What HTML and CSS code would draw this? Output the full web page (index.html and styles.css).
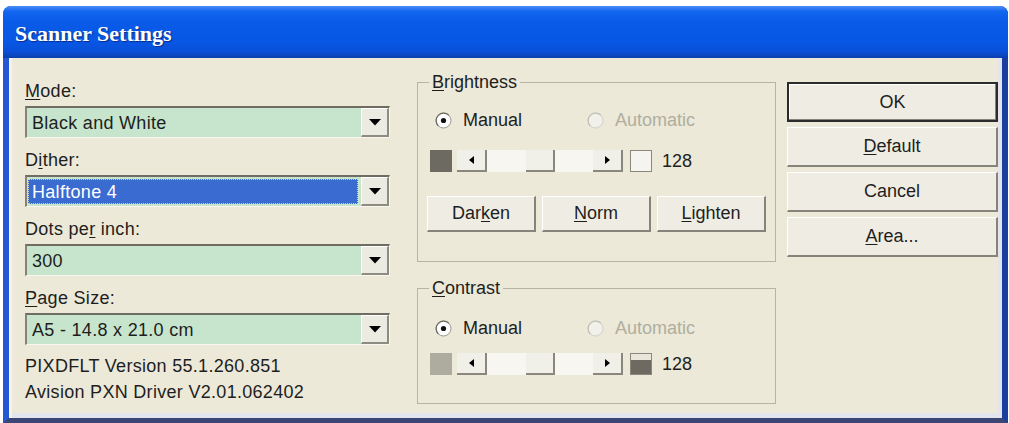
FILE: index.html
```html
<!DOCTYPE html>
<html>
<head>
<meta charset="utf-8">
<title>Scanner Settings</title>
<link rel="stylesheet" href="styles.css">
</head>
<body>
<div class="window">
  <div class="titlebar"><span class="title">Scanner Settings</span></div>
  <div class="client">
    <div class="col-left">
      <div class="label"><u>M</u>ode:</div>
      <div class="combo">
        <div class="combo-field">Black and White</div>
        <div class="combo-btn"><svg width="12" height="7" viewBox="0 0 12 7"><polygon points="0,0 12,0 6,6.5" fill="#000"/></svg></div>
      </div>
      <div class="label gap">D<u>i</u>ther:</div>
      <div class="combo">
        <div class="combo-field selected">Halftone 4</div>
        <div class="combo-btn"><svg width="12" height="7" viewBox="0 0 12 7"><polygon points="0,0 12,0 6,6.5" fill="#000"/></svg></div>
      </div>
      <div class="label gap">Dots pe<u>r</u> inch:</div>
      <div class="combo">
        <div class="combo-field">300</div>
        <div class="combo-btn"><svg width="12" height="7" viewBox="0 0 12 7"><polygon points="0,0 12,0 6,6.5" fill="#000"/></svg></div>
      </div>
      <div class="label gap"><u>P</u>age Size:</div>
      <div class="combo">
        <div class="combo-field">A5 - 14.8 x 21.0 cm</div>
        <div class="combo-btn"><svg width="12" height="7" viewBox="0 0 12 7"><polygon points="0,0 12,0 6,6.5" fill="#000"/></svg></div>
      </div>
      <div class="info first">PIXDFLT Version 55.1.260.851</div>
      <div class="info">Avision PXN Driver V2.01.062402</div>
    </div>

    <div class="col-mid">
      <fieldset class="group bright">
        <legend><u>B</u>rightness</legend>
        <div class="radio-row">
          <div class="radio r1"><svg width="17" height="17" viewBox="0 0 17 17"><circle cx="8.5" cy="8.5" r="7.5" fill="#fff" stroke="#9a988c"/><path d="M3.2 13.8 A7.5 7.5 0 0 1 13.8 3.2" fill="none" stroke="#6e6c62" stroke-width="1.2"/><circle cx="8.5" cy="8.5" r="2.6" fill="#111"/></svg><span>Manual</span></div>
          <div class="radio disabled"><svg width="17" height="17" viewBox="0 0 17 17"><circle cx="8.5" cy="8.5" r="7.5" fill="#f1f0ea" stroke="#d2d0c4"/><path d="M3.2 13.8 A7.5 7.5 0 0 1 13.8 3.2" fill="none" stroke="#c2c0b4" stroke-width="1.2"/></svg><span>Automatic</span></div>
        </div>
        <div class="slider-row">
          <div class="swatch dark"></div>
          <div class="scroll">
            <div class="sb-btn"><svg width="5" height="8" viewBox="0 0 5 8"><polygon points="5,0 5,8 0,4" fill="#000"/></svg></div>
            <div class="track"><div class="thumb"></div></div>
            <div class="sb-btn"><svg width="5" height="8" viewBox="0 0 5 8"><polygon points="0,0 0,8 5,4" fill="#000"/></svg></div>
          </div>
          <div class="valbox"></div>
          <span class="val">128</span>
        </div>
        <div class="btn-row">
          <button class="btn small">Dar<u>k</u>en</button>
          <button class="btn small"><u>N</u>orm</button>
          <button class="btn small"><u>L</u>ighten</button>
        </div>
      </fieldset>

      <fieldset class="group contrast">
        <legend><u>C</u>ontrast</legend>
        <div class="radio-row">
          <div class="radio r1"><svg width="17" height="17" viewBox="0 0 17 17"><circle cx="8.5" cy="8.5" r="7.5" fill="#fff" stroke="#9a988c"/><path d="M3.2 13.8 A7.5 7.5 0 0 1 13.8 3.2" fill="none" stroke="#6e6c62" stroke-width="1.2"/><circle cx="8.5" cy="8.5" r="2.6" fill="#111"/></svg><span>Manual</span></div>
          <div class="radio disabled"><svg width="17" height="17" viewBox="0 0 17 17"><circle cx="8.5" cy="8.5" r="7.5" fill="#f1f0ea" stroke="#d2d0c4"/><path d="M3.2 13.8 A7.5 7.5 0 0 1 13.8 3.2" fill="none" stroke="#c2c0b4" stroke-width="1.2"/></svg><span>Automatic</span></div>
        </div>
        <div class="slider-row">
          <div class="swatch light"></div>
          <div class="scroll">
            <div class="sb-btn"><svg width="5" height="8" viewBox="0 0 5 8"><polygon points="5,0 5,8 0,4" fill="#000"/></svg></div>
            <div class="track"><div class="thumb"></div></div>
            <div class="sb-btn"><svg width="5" height="8" viewBox="0 0 5 8"><polygon points="0,0 0,8 5,4" fill="#000"/></svg></div>
          </div>
          <div class="valbox half"></div>
          <span class="val">128</span>
        </div>
      </fieldset>
    </div>

    <div class="col-right">
      <button class="btn big default">OK</button>
      <button class="btn big"><u>D</u>efault</button>
      <button class="btn big">Cancel</button>
      <button class="btn big"><u>A</u>rea...</button>
    </div>
  </div>
</div>
</body>
</html>
```

FILE: styles.css
```css
* { box-sizing: border-box; }

html, body {
  margin: 0;
  padding: 0;
  background: #ffffff;
}

body {
  font-family: "Liberation Sans", Arial, sans-serif;
  font-size: 18px;
  color: #1e1e1e;
}

u {
  text-decoration-thickness: 1px;
  text-underline-offset: 2px;
}

.window {
  margin: 6px 0 0 3px;
  width: 1005px;
  height: 417px;
  display: flex;
  flex-direction: column;
  border-left: 6px solid #2457d6;
  border-right: 6px solid #1b3f9e;
  border-bottom: 5px solid #3b4675;
  border-radius: 8px 8px 0 0;
}

.titlebar {
  margin: 0 -6px;
  height: 52px;
  flex: none;
  display: flex;
  align-items: center;
  padding: 4px 0 0 12px;
  border-radius: 8px 8px 0 0;
  background: linear-gradient(#4a8ef6 0%, #1366ee 10%, #0a5be8 30%, #0756e4 70%, #0a4fd6 88%, #0a3fae 100%);
}

.title {
  font-family: "Liberation Serif", "Times New Roman", serif;
  font-weight: bold;
  font-size: 22px;
  color: #ffffff;
  text-shadow: 1px 1px 1px #0b2a86;
}

.client {
  flex: 1;
  display: flex;
  align-items: flex-start;
  padding: 14px 4px 0 16px;
  background: #ece9d8;
  box-shadow: inset 3px 0 0 #f4f3ee, inset -4px -5px 0 #e3e5ee;
}

/* left column */
.col-left {
  width: 365px;
  flex: none;
  padding-top: 8px;
  letter-spacing: 0.3px;
}

.label {
  line-height: 22px;
  height: 22px;
}

.label.gap {
  margin-top: 11px;
}

.combo {
  margin-top: 4px;
  height: 32px;
  display: flex;
  border-top: 2px solid #6f6d62;
  border-left: 2px solid #858375;
  border-right: 1px solid #f7f6f0;
  border-bottom: 1px solid #f7f6f0;
  background: #c6e5cc;
}

.combo-field {
  flex: 1;
  display: flex;
  align-items: center;
  padding-left: 5px;
  line-height: 22px;
}

.combo-field.selected {
  margin: 2px 3px 2px 1px;
  padding-left: 4px;
  background: #3a6bd0;
  color: #ffffff;
  outline: 1px dotted #d8d6a8;
  outline-offset: -1px;
}

.combo-btn {
  width: 28px;
  flex: none;
  display: flex;
  align-items: center;
  justify-content: center;
  background: #ecebe2;
  border-top: 1px solid #ffffff;
  border-left: 1px solid #ffffff;
  border-right: 2px solid #8e8c80;
  border-bottom: 2px solid #8e8c80;
}

.info {
  line-height: 26px;
  height: 26px;
}

.info.first {
  margin-top: 8px;
}

/* middle column */
.col-mid {
  width: 359px;
  flex: none;
  margin-left: 27px;
}

.group {
  margin: 0;
  min-width: 0;
  width: 100%;
  border: 1px solid #b6b4a6;
  padding: 0 9px 29px 9px;
}

.group.contrast {
  margin-top: 16px;
  padding-bottom: 28px;
}

legend {
  padding: 0 3px;
  margin-left: 2px;
  line-height: 20px;
  font-size: 18px;
}

.radio-row {
  display: flex;
  height: 22px;
  align-items: center;
  margin-top: 17px;
  padding-left: 8px;
}

.contrast .radio-row {
  margin-top: 19px;
}

.radio {
  display: flex;
  align-items: center;
  gap: 11px;
  line-height: 22px;
}

.radio.r1 {
  width: 152px;
}

.radio svg {
  display: block;
}

.radio.disabled {
  color: #b0ae9f;
}

.slider-row {
  display: flex;
  align-items: center;
  height: 22px;
  margin-top: 19px;
  padding-left: 3px;
}

.contrast .slider-row {
  margin-top: 14px;
}

.swatch {
  width: 22px;
  height: 22px;
}

.swatch.dark { background: #6c6a61; }
.swatch.light { background: #aeac9f; }

.scroll {
  margin-left: 5px;
  width: 166px;
  height: 22px;
  display: flex;
  background: #f7f6f1;
}

.sb-btn {
  width: 30px;
  height: 22px;
  display: flex;
  align-items: center;
  justify-content: center;
  background: #f0efe8;
  border-right: 2px solid #8a887c;
  border-bottom: 2px solid #8a887c;
}

.track {
  flex: 1;
  display: flex;
  justify-content: center;
}

.thumb {
  width: 29px;
  height: 22px;
  background: #f0efe8;
  border-right: 2px solid #8a887c;
  border-bottom: 2px solid #8a887c;
}

.valbox {
  margin-left: 7px;
  width: 22px;
  height: 22px;
  border: 1px solid #8a887c;
  background: #f5f4ef;
}

.valbox.half {
  background: linear-gradient(#e9e7dc 0 30%, #6c6a61 30% 100%);
}

.val {
  margin-left: 10px;
  line-height: 22px;
}

.btn-row {
  display: flex;
  gap: 6px;
  margin-top: 24px;
}

.btn {
  font-family: "Liberation Sans", Arial, sans-serif;
  font-size: 18px;
  color: #1e1e1e;
  background: #efede3;
  border-top: 1px solid #ffffff;
  border-left: 1px solid #ffffff;
  border-right: 2px solid #85837a;
  border-bottom: 2px solid #85837a;
  padding: 0;
  margin: 0;
  display: flex;
  align-items: center;
  justify-content: center;
}

.btn.small {
  width: 110px;
  height: 36px;
}

/* right column */
.col-right {
  width: 211px;
  flex: none;
  margin-left: 11px;
  padding-top: 10px;
  display: flex;
  flex-direction: column;
  gap: 5px;
}

.btn.big {
  width: 211px;
  height: 40px;
}

.btn.default {
  border: 2px solid #2b2b2b;
  box-shadow: inset -1px -1px 0 #85837a, inset 1px 1px 0 #ffffff;
}
```
